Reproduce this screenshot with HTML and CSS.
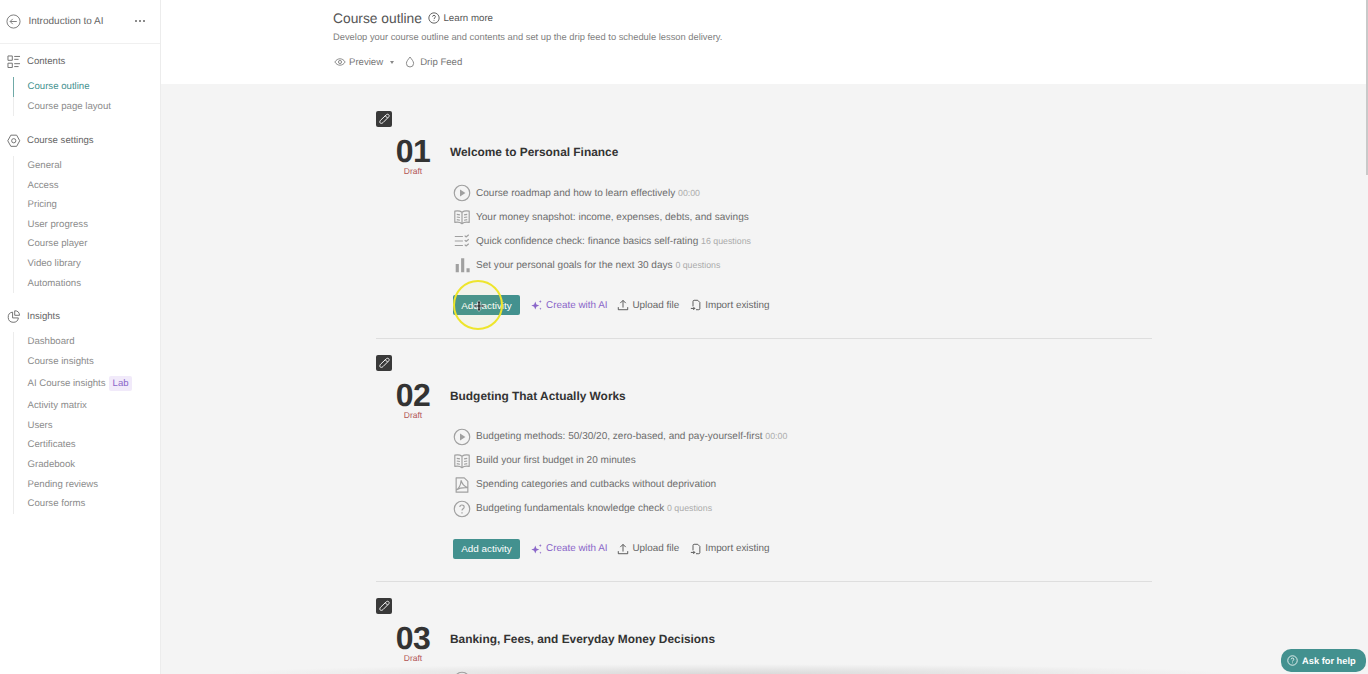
FILE: index.html
```html
<!DOCTYPE html>
<html lang="en">
<head>
  <meta charset="UTF-8" />
  <meta name="viewport" content="width=device-width, initial-scale=1.0" />
  <title>Course outline</title>
  <link rel="stylesheet" href="styles.css">
</head>
<body>
  <svg class="sprites" aria-hidden="true">
    <symbol id="i-play" viewBox="0 0 20 20"><circle cx="10" cy="10" r="8.6"/><path class="solid" d="M7.8 6.2v7.6l6-3.8z"/></symbol>
    <symbol id="i-book" viewBox="0 0 20 20"><path d="M2 3.5c3-.6 6-.3 8 1.200 2-1.500 5-1.800 8-1.200v12.500c-3-.6-6-.3-8 1.500-2-1.800-5-2.100-8-1.500zM10 4.700V17.500M4.200 7l3.500.6M4.200 10l3.500.6M4.200 13l3.500.6M15.800 7l-3.500.6M15.800 10l-3.500.6M15.800 13l-3.500.6"/></symbol>
    <symbol id="i-quiz" viewBox="0 0 20 20"><path d="M2 5h9M2 10h9M2 15h9M13 4l1.500 1.500L17.500 3M13 9l1.500 1.500 3-2.500M13 14l1.500 1.500 3-2.500"/></symbol>
    <symbol id="i-bars" viewBox="0 0 20 20"><path class="solid" d="M3 9h3.500v9H3zM9 2.500h3.500V18H9zM15 13.500h3.500V18H15z"/></symbol>
    <symbol id="i-pdf" viewBox="0 0 20 20"><path d="M3.500 2h9l4 4v12h-13zM3.500 15.500c3-1.500 5-5 5.500-10.500 1 4 3.500 6.500 7.500 8-4-.3-9 0-13 2.500z"/></symbol>
    <symbol id="i-help" viewBox="0 0 20 20"><circle cx="10" cy="10" r="8.600"/><path d="M7.600 7.800c0-3 4.800-3 4.800 0 0 2-2.400 2-2.400 4"/><path class="solid" d="M9.300 13.600h1.400v1.400H9.300z"/></symbol>
    <symbol id="i-pencil" viewBox="0 0 16 16"><path d="M10.300 3.800c.8-.8 2-.7 2.500 0 .5.600.5 1.500-.2 2.200L7 11.600c-.9.900-2.200 1-2.800.4-.6-.6-.5-1.900.4-2.800zM9.300 4.800l2.300 2.300"/></symbol>
    <symbol id="i-spark" viewBox="0 0 14 14"><path class="solid" d="M5 3l1.300 3.300 3.300 1.300-3.300 1.300L5 12.200 3.700 8.900.4 7.600l3.300-1.300z"/><path class="solid" d="M10.800 1.200l.5 1.300 1.300.5-1.300.5-.5 1.300-.5-1.300L9 3l1.300-.5zM11 10l.4 1 1 .4-1 .4-.4 1-.4-1-1-.4 1-.4z"/></symbol>
    <symbol id="i-upload" viewBox="0 0 14 14"><path d="M7 10V1.800M3.800 4.800L7 1.600l3.200 3.200M1.500 9.500v3h11v-3"/></symbol>
    <symbol id="i-import" viewBox="0 0 14 14"><path d="M3.500 8.500V2.800c0-.7.500-1.300 1.300-1.300H9l2.500 2.500v7.200c0 .8-.5 1.300-1.300 1.300H7M1 11h4.500M3.800 9.200L5.600 11l-1.800 1.800"/></symbol>
  </svg>

  <aside class="sidebar">
    <div class="course-top">
      <svg class="back" viewBox="0 0 16 16"><circle cx="8" cy="8" r="7"/><path d="M11.500 8h-7M7.200 5.200L4.400 8l2.800 2.800"/></svg>
      <span class="course-name">Introduction to AI</span>
      <span class="dots"><i></i><i></i><i></i></span>
    </div>

    <div class="nav-group group-first">
      <div class="nav-head">
        <svg viewBox="0 0 14 14"><path d="M1 1h4.500v4.500H1zM1 8.500h4.500V13H1zM7.500 1.500h6M7.500 4.500h4.500M7.500 9h6M7.500 12h4.500"/></svg>
        Contents
      </div>
      <ul class="nav-list">
        <li class="active">Course outline</li>
        <li>Course page layout</li>
      </ul>
    </div>

    <div class="nav-group">
      <div class="nav-head">
        <svg viewBox="0 0 14 14"><path d="M4 1.200h6L13.200 7 10 12.800H4L.8 7z"/><circle cx="7" cy="7" r="2.200"/></svg>
        Course settings
      </div>
      <ul class="nav-list">
        <li>General</li>
        <li>Access</li>
        <li>Pricing</li>
        <li>User progress</li>
        <li>Course player</li>
        <li>Video library</li>
        <li>Automations</li>
      </ul>
    </div>

    <div class="nav-group group-last">
      <div class="nav-head">
        <svg viewBox="0 0 14 14"><path d="M5.800 2.200a5.300 5.300 0 1 0 6 6H5.800zM8 .8v4.700h5A5 5 0 0 0 8 .8z"/></svg>
        Insights
      </div>
      <ul class="nav-list">
        <li>Dashboard</li>
        <li>Course insights</li>
        <li class="with-badge">AI Course insights <span class="badge">Lab</span></li>
        <li>Activity matrix</li>
        <li>Users</li>
        <li>Certificates</li>
        <li>Gradebook</li>
        <li>Pending reviews</li>
        <li>Course forms</li>
      </ul>
    </div>
  </aside>

  <main class="main">
    <header class="page-head">
      <div class="title-row">
        <h1>Course outline</h1>
        <svg class="learn-icon"><use href="#i-help"/></svg>
        <span class="learn">Learn more</span>
      </div>
      <p class="subtitle">Develop your course outline and contents and set up the drip feed to schedule lesson delivery.</p>
      <div class="head-actions">
        <span class="head-action">
          <svg viewBox="0 0 14 14"><path d="M1 7c3-5 9-5 12 0-3 5-9 5-12 0z"/><circle cx="7" cy="7" r="1.800"/></svg>
          Preview <i class="caret"></i>
        </span>
        <span class="head-action">
          <svg viewBox="0 0 14 14"><path d="M7 1.200C5 4 2.800 6.200 2.800 8.600a4.200 4.200 0 0 0 8.400 0C11.200 6.200 9 4 7 1.200z"/></svg>
          Drip Feed
        </span>
      </div>
    </header>

    <div class="outline">
      <section class="lesson">
        <span class="edit"><svg><use href="#i-pencil"/></svg></span>
        <div class="lesson-head">
          <div class="num">01<span class="draft">Draft</span></div>
          <h2>Welcome to Personal Finance</h2>
        </div>
        <ul class="activities">
          <li><svg><use href="#i-play"/></svg><span>Course roadmap and how to learn effectively <small>00:00</small></span></li>
          <li><svg><use href="#i-book"/></svg><span>Your money snapshot: income, expenses, debts, and savings</span></li>
          <li><svg><use href="#i-quiz"/></svg><span>Quick confidence check: finance basics self-rating <small>16 questions</small></span></li>
          <li><svg><use href="#i-bars"/></svg><span>Set your personal goals for the next 30 days <small>0 questions</small></span></li>
        </ul>
        <div class="actions">
          <button class="add">Add activity</button>
          <span class="act ai"><svg><use href="#i-spark"/></svg>Create with AI</span>
          <span class="act"><svg><use href="#i-upload"/></svg>Upload file</span>
          <span class="act"><svg><use href="#i-import"/></svg>Import existing</span>
        </div>
      </section>

      <section class="lesson">
        <span class="edit"><svg><use href="#i-pencil"/></svg></span>
        <div class="lesson-head">
          <div class="num">02<span class="draft">Draft</span></div>
          <h2>Budgeting That Actually Works</h2>
        </div>
        <ul class="activities">
          <li><svg><use href="#i-play"/></svg><span>Budgeting methods: 50/30/20, zero-based, and pay-yourself-first <small>00:00</small></span></li>
          <li><svg><use href="#i-book"/></svg><span>Build your first budget in 20 minutes</span></li>
          <li><svg><use href="#i-pdf"/></svg><span>Spending categories and cutbacks without deprivation</span></li>
          <li><svg><use href="#i-help"/></svg><span>Budgeting fundamentals knowledge check <small>0 questions</small></span></li>
        </ul>
        <div class="actions">
          <button class="add">Add activity</button>
          <span class="act ai"><svg><use href="#i-spark"/></svg>Create with AI</span>
          <span class="act"><svg><use href="#i-upload"/></svg>Upload file</span>
          <span class="act"><svg><use href="#i-import"/></svg>Import existing</span>
        </div>
      </section>

      <section class="lesson">
        <span class="edit"><svg><use href="#i-pencil"/></svg></span>
        <div class="lesson-head">
          <div class="num">03<span class="draft">Draft</span></div>
          <h2>Banking, Fees, and Everyday Money Decisions</h2>
        </div>
        <ul class="activities">
          <li><svg><use href="#i-play"/></svg></li>
        </ul>
      </section>
    </div>
  </main>

  <!-- things floating over the page -->
  <div class="cursor-ring"></div>
  <svg class="cursor" viewBox="0 0 14 14"><path d="M7 .5L9.500 3.500H8.300V6H11V5l2.500 2L11 9V8H8.300v2.500h1.200L7 13.500l-2.500-3h1.200V8H3v1L.5 7 3 5v1h2.700V3.500H4.500z"/></svg>
  <div class="bottom-fade"></div>
  <div class="help-btn"><svg><use href="#i-help"/></svg>Ask for help</div>
  <div class="scroll-thumb"></div>
</body>
</html>
```

FILE: styles.css
```css
:root {
  --teal: #43918f;
  --purple: #8a66c9;
  --text: #666;
  --muted: #8b8b8b;
  --line: #e4e4e4;
}

* {
  box-sizing: border-box;
}

html, body {
  height: 100%;
  overflow: hidden;
}

body {
  display: flex;
  margin: 0;
  background-color: #fff;
  color: var(--text);
  font-family: "Liberation Sans", Arial, sans-serif;
  font-size: 11px;
  text-rendering: geometricPrecision;
}

.sprites {
  display: none;
}

svg {
  fill: none;
  stroke: currentColor;
  stroke-width: 1;
  stroke-linejoin: round;
  flex-shrink: 0;
}

svg .solid,
symbol .solid {
  fill: currentColor;
  stroke: none;
}

/* sidebar */
.sidebar {
  width: 161px;
  flex-shrink: 0;
  border-right: 1px solid #ececec;
  background-color: #fff;
}

.course-top {
  display: flex;
  align-items: center;
  height: 43.5px;
  padding: 0 15px 0 6px;
  border-bottom: 1px solid #f0f0f0;
}

.back {
  width: 15px;
  height: 15px;
  color: #777;
}

.course-name {
  margin-left: 7.5px;
  font-size: 10px;
  color: #666;
}

.dots {
  display: flex;
  gap: 2px;
  margin-left: auto;
}

.dots i {
  width: 2px;
  height: 2px;
  border-radius: 50%;
  background-color: #666;
}

.nav-group {
  margin-top: 14.3px;
}

.group-first {
  margin-top: 8px;
}

.group-last {
  margin-top: 13.3px;
}

.nav-head {
  display: flex;
  align-items: center;
  gap: 6.5px;
  height: 20px;
  padding-left: 7px;
  font-size: 9.600px;
  color: #666;
}

.nav-head svg {
  width: 13.5px;
  height: 13.5px;
  color: #707070;
}

.nav-list {
  list-style: none;
  margin: 5.5px 0 0 13px;
  padding: 0;
  border-left: 1.500px solid #ececec;
}

.nav-list li {
  position: relative;
  height: 19.600px;
  padding-left: 13.500px;
  line-height: 19.600px;
  font-size: 9.650px;
  color: var(--muted);
}

.nav-list .active {
  color: var(--teal);
}

.nav-list .active::before {
  content: "";
  position: absolute;
  left: -1.500px;
  top: 0;
  bottom: 0;
  width: 1.500px;
  background-color: #6fa9a7;
}

.nav-list .with-badge {
  display: flex;
  align-items: center;
  gap: 3px;
  height: 25px;
  line-height: 1;
}

.badge {
  padding: 3px 4px;
  border-radius: 2px;
  background-color: #f1eafa;
  color: var(--purple);
  font-size: 9.500px;
}

/* main column */
.main {
  flex: 1;
  min-width: 0;
}

.page-head {
  height: 84px;
  padding: 10px 0 0 172px;
  background-color: #fff;
}

.title-row {
  display: flex;
  align-items: center;
  height: 16px;
}

h1 {
  margin: 0;
  font-size: 13.800px;
  font-weight: 400;
  color: #555;
}

.learn-icon {
  width: 12px;
  height: 12px;
  margin-left: 6px;
  stroke-width: 1.500;
  color: #555;
}

.learn {
  margin-left: 3.500px;
  font-size: 9.700px;
  color: #555;
}

.subtitle {
  margin: 4px 0 0;
  font-size: 9.360px;
  line-height: 14px;
  color: #808080;
}

.head-actions {
  display: flex;
  align-items: center;
  gap: 10px;
  margin-top: 11px;
}

.head-action {
  display: flex;
  align-items: center;
  gap: 4px;
  height: 14px;
  font-size: 9.600px;
  color: #777;
}

.head-action:first-child {
  padding-left: 1px;
  gap: 3px;
}

.head-action svg {
  width: 12px;
  height: 12px;
}

.caret {
  width: 0;
  height: 0;
  margin-left: 4px;
  border: 2.500px solid transparent;
  border-top: 3px solid #888;
  border-bottom: 0;
}

.outline {
  height: 590px;
  padding: 11px 216px 0 215px;
  background-color: #f4f4f4;
  overflow: hidden;
}

/* one lesson block */
.lesson {
  height: 243.600px;
  padding-top: 16px;
  border-bottom: 1px solid #dedede;
}

.edit {
  display: flex;
  align-items: center;
  justify-content: center;
  width: 16px;
  height: 16px;
  border-radius: 2px;
  background-color: #393939;
  color: #f3f3f3;
}

.edit svg {
  width: 16px;
  height: 16px;
}

.lesson-head {
  display: flex;
  margin-top: 9px;
}

.num {
  width: 74px;
  font-size: 32px;
  font-weight: 700;
  line-height: 30px;
  text-align: center;
  letter-spacing: -0.5px;
  color: #333;
}

.draft {
  display: block;
  font-size: 8.500px;
  font-weight: 400;
  line-height: 10px;
  letter-spacing: 0;
  color: #b25555;
}

h2 {
  margin: 0;
  font-size: 11.900px;
  font-weight: 700;
  line-height: 32px;
  color: #333;
}

.activities {
  list-style: none;
  margin: 5px 0 0 77px;
  padding: 0;
}

.activities li {
  display: flex;
  align-items: center;
  gap: 5px;
  height: 24px;
  font-size: 10.050px;
  color: #6d6d6d;
}

.activities svg {
  width: 18px;
  height: 18px;
  stroke-width: 1.300;
  color: #a0a0a0;
}

small {
  font-size: 8.800px;
  color: #ababab;
}

.actions {
  display: flex;
  align-items: center;
  height: 20px;
  margin: 18px 0 0 77px;
}

.add {
  width: 67px;
  height: 20px;
  padding: 0;
  border: none;
  border-radius: 2px;
  background-color: var(--teal);
  color: #fff;
  font-family: inherit;
  font-size: 9.900px;
}

.act {
  display: flex;
  align-items: center;
  gap: 3px;
  margin-left: 11px;
  font-size: 9.900px;
  color: #666;
}

.ai + .act {
  margin-left: 10px;
}

.act svg {
  width: 12px;
  height: 12px;
  color: #444;
}

.ai,
.ai svg {
  color: var(--purple);
}

/* overlays */
.cursor-ring {
  position: absolute;
  left: 453px;
  top: 280px;
  width: 50px;
  height: 50px;
  border: 2px solid #eee52c;
  border-radius: 50%;
  background-color: rgba(240, 230, 60, 0.05);
}

.cursor {
  position: absolute;
  left: 473px;
  top: 299px;
  width: 12px;
  height: 14px;
  fill: #333;
  stroke: #fff;
  stroke-width: 0.6;
}

.bottom-fade {
  position: absolute;
  left: 220px;
  right: 130px;
  bottom: 0;
  height: 10px;
  background: radial-gradient(ellipse at bottom, rgba(120, 120, 120, 0.22), rgba(120, 120, 120, 0) 70%);
}

.help-btn {
  position: absolute;
  left: 1281px;
  top: 649px;
  display: flex;
  align-items: center;
  gap: 4px;
  width: 85px;
  height: 23px;
  padding-left: 6px;
  border-radius: 10px;
  background-color: var(--teal);
  color: #fff;
  font-size: 9.300px;
  font-weight: 700;
}

.help-btn svg {
  width: 11px;
  height: 11px;
  stroke-width: 1.500;
}

.scroll-thumb {
  position: absolute;
  right: 0;
  top: 0;
  width: 2px;
  height: 175px;
  background-color: #c9c9c9;
}
```
